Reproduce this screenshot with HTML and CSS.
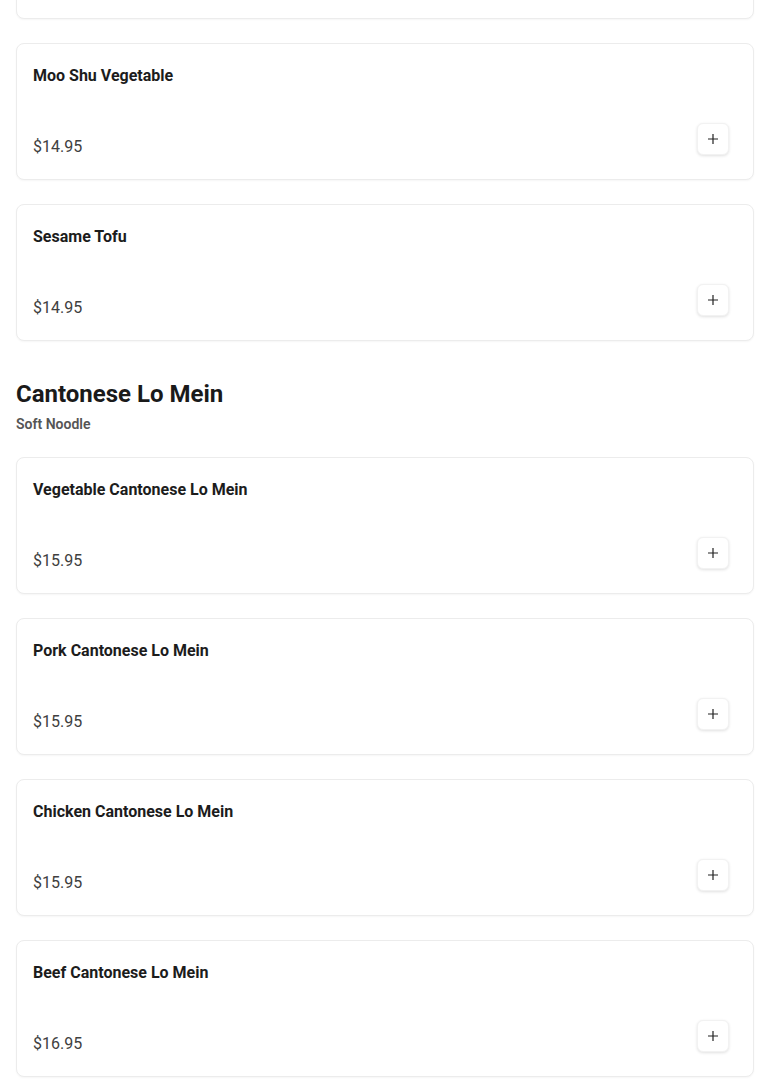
FILE: index.html
```html
<!DOCTYPE html>
<html lang="en">
<head>
<meta charset="utf-8">
<title>Menu</title>
<link rel="stylesheet" href="styles.css">
</head>
<body>
<main class="page">
  <section class="section">
    <div class="cards">
      <article class="card card-offscreen" aria-hidden="true"></article>
      <article class="card">
        <h3 class="item-name">Moo Shu Vegetable</h3>
        <div class="item-row">
          <span class="price">$14.95</span>
          <button class="add" aria-label="Add"><svg viewBox="0 0 12 12" width="12" height="12"><path d="M6 1v10M1 6h10" stroke="#222" stroke-width="1.2" fill="none"/></svg></button>
        </div>
      </article>
      <article class="card">
        <h3 class="item-name">Sesame Tofu</h3>
        <div class="item-row">
          <span class="price">$14.95</span>
          <button class="add" aria-label="Add"><svg viewBox="0 0 12 12" width="12" height="12"><path d="M6 1v10M1 6h10" stroke="#222" stroke-width="1.2" fill="none"/></svg></button>
        </div>
      </article>
    </div>
  </section>

  <section class="section">
    <header class="section-head">
      <h2 class="section-title">Cantonese Lo Mein</h2>
      <p class="section-sub">Soft Noodle</p>
    </header>
    <div class="cards">
      <article class="card">
        <h3 class="item-name">Vegetable Cantonese Lo Mein</h3>
        <div class="item-row">
          <span class="price">$15.95</span>
          <button class="add" aria-label="Add"><svg viewBox="0 0 12 12" width="12" height="12"><path d="M6 1v10M1 6h10" stroke="#222" stroke-width="1.2" fill="none"/></svg></button>
        </div>
      </article>
      <article class="card">
        <h3 class="item-name">Pork Cantonese Lo Mein</h3>
        <div class="item-row">
          <span class="price">$15.95</span>
          <button class="add" aria-label="Add"><svg viewBox="0 0 12 12" width="12" height="12"><path d="M6 1v10M1 6h10" stroke="#222" stroke-width="1.2" fill="none"/></svg></button>
        </div>
      </article>
      <article class="card">
        <h3 class="item-name">Chicken Cantonese Lo Mein</h3>
        <div class="item-row">
          <span class="price">$15.95</span>
          <button class="add" aria-label="Add"><svg viewBox="0 0 12 12" width="12" height="12"><path d="M6 1v10M1 6h10" stroke="#222" stroke-width="1.2" fill="none"/></svg></button>
        </div>
      </article>
      <article class="card">
        <h3 class="item-name">Beef Cantonese Lo Mein</h3>
        <div class="item-row">
          <span class="price">$16.95</span>
          <button class="add" aria-label="Add"><svg viewBox="0 0 12 12" width="12" height="12"><path d="M6 1v10M1 6h10" stroke="#222" stroke-width="1.2" fill="none"/></svg></button>
        </div>
      </article>
    </div>
  </section>
</main>
</body>
</html>
```

FILE: styles.css
```css
* { box-sizing: border-box; }

html, body {
  margin: 0;
  padding: 0;
  background: #ffffff;
  font-family: Roboto, "Liberation Sans", Arial, sans-serif;
  color: #1a1a1a;
}

.page {
  margin-top: -118px;
  padding: 0 16px 10px;
  display: flex;
  flex-direction: column;
  gap: 37px;
}

.section {
  display: flex;
  flex-direction: column;
  gap: 23px;
}

.cards {
  display: flex;
  flex-direction: column;
  gap: 24px;
}

.section-title {
  margin: 0;
  font-size: 24px;
  line-height: 32px;
  font-weight: 700;
  color: #1a1a1a;
}

.section-sub {
  margin: 4px 0 0;
  font-size: 14px;
  line-height: 20px;
  font-weight: 600;
  color: #555555;
}

.card {
  height: 137px;
  border: 1px solid #ececec;
  border-radius: 8px;
  background: #ffffff;
  box-shadow: 0 1px 2px rgba(0, 0, 0, 0.04);
  padding: 20px 24px 20px 16px;
  display: flex;
  flex-direction: column;
  justify-content: space-between;
}

.item-name {
  margin: 0;
  font-size: 16px;
  line-height: 24px;
  font-weight: 700;
  color: #1c1c1c;
}

.item-row {
  display: flex;
  justify-content: space-between;
  align-items: flex-end;
}

.price {
  font-size: 16px;
  line-height: 24px;
  font-weight: 400;
  color: #404040;
}

.add {
  width: 32px;
  height: 32px;
  margin-bottom: 4px;
  padding: 0;
  border: 1px solid #f2f2f2;
  border-radius: 6px;
  background: #ffffff;
  box-shadow: 0 1px 3px rgba(0, 0, 0, 0.12);
  display: flex;
  align-items: center;
  justify-content: center;
  cursor: pointer;
}

.add svg { display: block; }
```
